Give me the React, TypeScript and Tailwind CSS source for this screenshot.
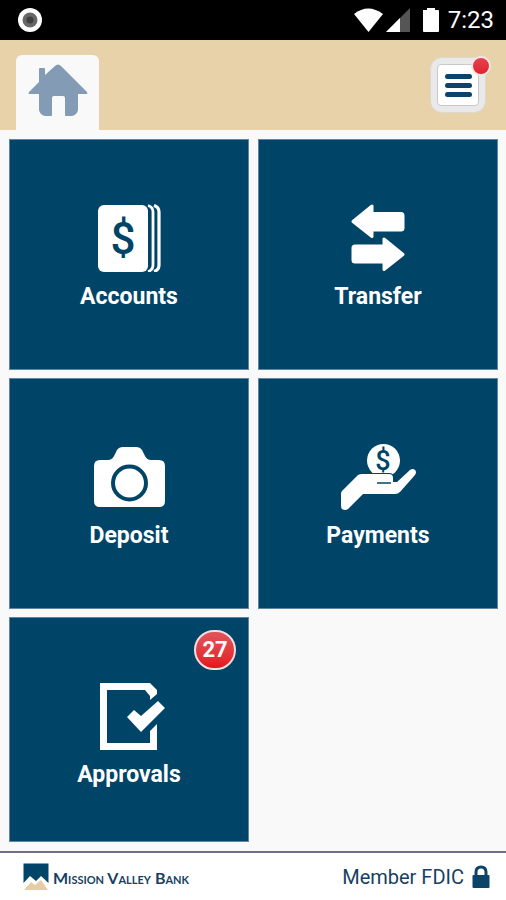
import type { ReactNode } from "react";

function AccountsIcon() {
  return (
    <svg width="64" height="68" viewBox="0 0 64 68" aria-hidden="true">
      <rect x="1" y="1" width="50" height="67" rx="6" fill="#fff" />
      <path d="M51 1.500 Q56 3 56 8 V61 Q56 66 51 67.500" fill="none" stroke="#fff" strokeWidth="2.800" />
      <path d="M57 1.500 Q62 3 62 8 V61 Q62 66 57 67.500" fill="none" stroke="#fff" strokeWidth="3.200" />
      <text x="26" y="50" textAnchor="middle" className="fill-[#004568] font-[Roboto,sans-serif] text-[44px] font-medium">
        $
      </text>
    </svg>
  );
}

function TransferIcon() {
  return (
    <svg width="54" height="68" viewBox="0 0 54 68" fill="#fff" stroke="#fff" strokeWidth="3" strokeLinejoin="round" aria-hidden="true">
      <path d="M2 17.500 L21 2 V9.500 H50 Q52 9.500 52 11.500 V24 Q52 26 50 26 H21 V32.500 Z" />
      <path d="M52 50.500 L33 35 V42 H4 Q2 42 2 44 V56 Q2 58 4 58 H33 V65.500 Z" />
    </svg>
  );
}

function DepositIcon() {
  return (
    <svg width="72" height="68" viewBox="0 0 72 68" aria-hidden="true">
      <path
        d="M7 17 H15 Q19 17 21 13 L24 7 Q26 4 30 4 H43 Q47 4 49 7 L52 13 Q54 17 58 17 H66 Q72 17 72 23 V58 Q72 64 66 64 H7 Q1 64 1 58 V23 Q1 17 7 17 Z"
        fill="#fff"
      />
      <circle cx="36.500" cy="40" r="16.500" fill="none" stroke="#004568" strokeWidth="4" />
    </svg>
  );
}

function PaymentsIcon() {
  return (
    <svg width="76" height="68" viewBox="0 0 76 68" aria-hidden="true">
      <circle cx="43.500" cy="17.500" r="16.500" fill="#fff" />
      <text x="43" y="27" textAnchor="middle" className="fill-[#004568] font-[Roboto,sans-serif] text-[27px] font-medium">
        $
      </text>
      <path
        d="M2 48 L18 32 Q20 31 22 31 H49 Q53 31 53 35 V39 H57 L70 27 Q73 25 75 27 Q77 29 75 32 L60 49 Q58 51 55 51 H23 L8 66 Q5 68 2 66 Q1 65 1 62 V51 Q1 49 2 48 Z"
        fill="#fff"
        stroke="#004568"
        strokeWidth="2"
        paintOrder="stroke"
      />
      <path d="M37 40 H51" stroke="#004568" strokeWidth="1.500" />
    </svg>
  );
}

function ApprovalsIcon() {
  return (
    <svg width="72" height="68" viewBox="0 0 72 68" aria-hidden="true">
      <path d="M7 1 H57 L64 8 V12 L57 18 V14 L52 8 H14 V61 H57 V49 L64 42 V68 H7 Z" fill="#fff" />
      <path d="M34 35 L41 28 L48 34 L65 19 L72 26 L48 50 Z" fill="#fff" />
    </svg>
  );
}

type TileProps = { label: string; icon: ReactNode; count?: number };

function Tile({ label, icon, count }: TileProps) {
  return (
    <button
      type="button"
      className="relative flex flex-col items-center border border-[#5f86a2] bg-[#004568] pt-16 text-white"
    >
      {icon}
      <span className="mt-[13px] text-[23px] leading-6 font-bold">{label}</span>
      {count !== undefined && (
        <span className="absolute top-3 right-3 flex h-10 w-[42px] items-center justify-center rounded-full border-2 border-[#f2dfe2] bg-linear-to-b from-[#e0535c] to-[#e3131b] text-[22px] leading-6 font-bold">
          {count}
        </span>
      )}
    </button>
  );
}

function StatusBar() {
  return (
    <div className="flex h-10 items-center justify-between bg-black pr-3 pl-[18px] text-white">
      <svg width="24" height="24" viewBox="0 0 24 24" aria-hidden="true">
        <circle cx="12" cy="12" r="12" fill="#fff" />
        <circle cx="12" cy="12" r="7.500" fill="#686868" />
        <circle cx="12" cy="12" r="3.500" fill="#404040" />
      </svg>
      <div className="flex items-center">
        <svg width="86" height="24" viewBox="0 0 86 24" aria-hidden="true">
          <path d="M0 6 Q14 -5 29 6 L14.500 24 Z" fill="#fff" />
          <path d="M32 24 L56 0 V24 Z" fill="#555" />
          <path d="M32 24 L46 10 V24 Z" fill="#fff" />
          <path d="M69 2 H73 V0 H81 V2 H84 Q85 2 85 3 V23 Q85 24 84 24 H70 Q69 24 69 23 Z" fill="#fff" />
        </svg>
        <time className="ml-2 text-2xl">7:23</time>
      </div>
    </div>
  );
}

function Header() {
  return (
    <header className="flex h-[90px] items-end justify-between bg-[#e8d2aa] pr-5 pl-4">
      <a href="#home" aria-label="Home" className="flex h-[75px] w-[83px] justify-center rounded-t-md bg-[#f9f9f9] pt-2">
        <svg width="60" height="54" viewBox="0 0 60 54" fill="#839bb4" aria-hidden="true">
          <path d="M11 19 V6 Q11 5 12 5 H16 Q17 5 17 6 V12 L27 3 Q30 0 33 3 L59 29 Q60 31 58 31 H50 V47 Q49 52 44 53 H38 Q37 53 37 52 V35 Q37 33 35 33 H26 Q24 33 24 35 V52 Q24 53 23 53 H17 Q12 52 11 47 V31 H2 Q0 31 1 29 Z" />
        </svg>
      </a>
      <button
        type="button"
        aria-label="Menu"
        className="relative mb-[17px] flex h-[56px] w-[56px] items-center justify-center rounded-xl border border-[#ded9cf] bg-[#e9e9ea]"
      >
        <span className="flex h-[42px] w-[42px] flex-col items-center justify-center gap-1 rounded-sm border border-[#c9c9cb] bg-white">
          <span className="h-[5px] w-[27px] rounded-full bg-[#0c4469]" />
          <span className="h-[5px] w-[27px] rounded-full bg-[#0c4469]" />
          <span className="h-[5px] w-[27px] rounded-full bg-[#0c4469]" />
        </span>
        <span className="absolute -top-0.5 -right-1.5 h-5 w-5 rounded-full border-2 border-[#f7e6e3] bg-linear-to-b from-[#e5414e] to-[#e0212e]" />
      </button>
    </header>
  );
}

function Footer() {
  return (
    <footer className="flex h-[49px] items-center justify-between border-t-2 border-[#6f7088] bg-white pr-4 pl-[23px] text-[#173f63]">
      <div className="flex items-center gap-1">
        <svg width="26" height="28" viewBox="0 0 26 28" aria-hidden="true">
          <path d="M0.500 0.500 H25.500 V20 L18 13 L13 18 L7 13 L0.500 20 Z" fill="#004568" />
          <path d="M1 27 L8 19 L12 22 L18 17 L25 27 Z" fill="#e6cda3" />
        </svg>
        <span className="pt-0.5 font-[Lato,sans-serif] text-[16px] leading-5 font-bold [font-variant-caps:small-caps]">
          Mission Valley Bank
        </span>
      </div>
      <div className="flex items-center gap-2">
        <span className="text-xl">Member FDIC</span>
        <svg width="18" height="24" viewBox="0 0 18 24" aria-hidden="true">
          <path d="M4 12 V7 Q4 2 9 2 Q14 2 14 7 V12" fill="none" stroke="#0c4469" strokeWidth="3" />
          <rect x="0.500" y="10" width="17" height="13" rx="1" fill="#0c4469" />
        </svg>
      </div>
    </footer>
  );
}

export default function App() {
  return (
    <div className="flex min-h-screen flex-col bg-[#f9f9f9] font-[Roboto,sans-serif]">
      <StatusBar />
      <Header />
      <main className="grid grow grid-cols-2 grid-rows-[231px_231px_1fr] gap-x-[9px] gap-y-2 pt-[9px] pr-2 pb-[9px] pl-[9px]">
        <Tile label="Accounts" icon={<AccountsIcon />} />
        <Tile label="Transfer" icon={<TransferIcon />} />
        <Tile label="Deposit" icon={<DepositIcon />} />
        <Tile label="Payments" icon={<PaymentsIcon />} />
        <Tile label="Approvals" icon={<ApprovalsIcon />} count={27} />
      </main>
      <Footer />
    </div>
  );
}
